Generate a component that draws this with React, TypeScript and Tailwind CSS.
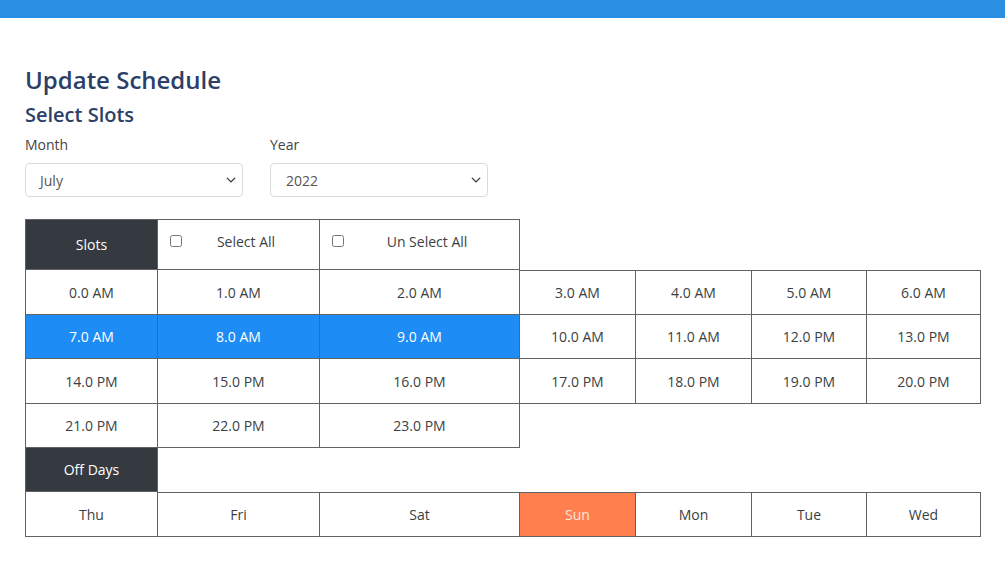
import React, { useState } from 'react';

const W = ['w-[132px]', 'w-[162px]', 'w-[200px]', 'w-[116px]', 'w-[116px]', 'w-[115px]', 'w-[114px]'];
const H = ['h-[45px]', 'h-[44px]', 'h-[45px]', 'h-[44px]'];

const slotRows: string[][] = [
  ['0.0 AM', '1.0 AM', '2.0 AM', '3.0 AM', '4.0 AM', '5.0 AM', '6.0 AM'],
  ['7.0 AM', '8.0 AM', '9.0 AM', '10.0 AM', '11.0 AM', '12.0 PM', '13.0 PM'],
  ['14.0 PM', '15.0 PM', '16.0 PM', '17.0 PM', '18.0 PM', '19.0 PM', '20.0 PM'],
  ['21.0 PM', '22.0 PM', '23.0 PM'],
];

const days = ['Thu', 'Fri', 'Sat', 'Sun', 'Mon', 'Tue', 'Wed'];

const Chevron = () => (
  <svg width="10" height="10" viewBox="0 0 16 16">
    <path d="M2 5l6 6 6-6" fill="none" stroke="#343a40" strokeWidth="2.2" strokeLinecap="round" strokeLinejoin="round" />
  </svg>
);

const App: React.FC = () => {
  const [selected, setSelected] = useState<string[]>(['7.0 AM', '8.0 AM', '9.0 AM']);
  const [offDays, setOffDays] = useState<string[]>(['Sun']);

  const toggle = (s: string) =>
    setSelected(selected.includes(s) ? selected.filter(x => x !== s) : [...selected, s]);
  const toggleDay = (d: string) =>
    setOffDays(offDays.includes(d) ? offDays.filter(x => x !== d) : [...offDays, d]);

  const cell = 'flex items-center justify-center border-r border-b border-[#5f6368] text-[14px]';

  return (
    <div className="min-h-[561px] bg-white font-['Open_Sans','Noto_Sans',sans-serif] text-[#3a3f44]">
      <div className="h-[18px] bg-[#2a8fe3]" />
      <div className="px-[25px] pt-[46px]">
        <h1 className="text-[24px] font-semibold leading-[32px] text-[#2c3f68]">Update Schedule</h1>
        <h2 className="mt-[6px] text-[20px] font-semibold leading-[26px] text-[#2c3f68]">Select Slots</h2>

        <div className="mt-[8px] flex gap-[27px]">
          <div className="w-[218px]">
            <label className="block text-[14px] leading-[18px] text-[#444]">Month</label>
            <div className="mt-[9px] flex h-[34px] items-center justify-between rounded-[4px] border border-[#d7dbe0] pl-[14px] pr-[6px] text-[14px] text-[#555]">
              <span>July</span>
              <Chevron />
            </div>
          </div>
          <div className="w-[218px]">
            <label className="block text-[14px] leading-[18px] text-[#444]">Year</label>
            <div className="mt-[9px] flex h-[34px] items-center justify-between rounded-[4px] border border-[#d7dbe0] pl-[15px] pr-[6px] text-[14px] text-[#555]">
              <span>2022</span>
              <Chevron />
            </div>
          </div>
        </div>

        <div className="mt-[22px] flex w-fit flex-col">
          <div className="flex h-[51px] w-fit border-t border-l border-[#5f6368]">
            <div className={`${cell} ${W[0]} bg-[#343a40] text-white`}>Slots</div>
            <label className={`${cell} ${W[1]} relative cursor-pointer`}>
              <input type="checkbox" className="absolute left-[12px] top-[15px] h-[12px] w-[12px]" onChange={() => setSelected(slotRows.flat())} />
              <span className="-mt-[6px] pl-[15px]">Select All</span>
            </label>
            <label className={`${cell} ${W[2]} relative cursor-pointer`}>
              <input type="checkbox" className="absolute left-[12px] top-[15px] h-[12px] w-[12px]" onChange={() => setSelected([])} />
              <span className="-mt-[6px] pl-[15px]">Un Select All</span>
            </label>
          </div>
          {slotRows.map((row, ri) => (
            <div key={ri} className={`flex ${H[ri]} border-l border-[#5f6368]`}>
              {row.map((s, i) => {
                const on = selected.includes(s);
                return (
                  <div
                    key={s}
                    onClick={() => toggle(s)}
                    className={`${cell} ${W[i]} cursor-pointer ${ri === 0 && i >= 3 ? 'border-t' : ''} ${on ? 'bg-[#1e8cf5] text-white' : ''}`}
                  >
                    {s}
                  </div>
                );
              })}
            </div>
          ))}
          <div className="flex h-[44px] border-l border-[#5f6368]">
            <div className={`${cell} ${W[0]} bg-[#343a40] text-white`}>Off Days</div>
          </div>
          <div className="flex h-[45px] border-l border-[#5f6368]">
            {days.map((d, i) => {
              const on = offDays.includes(d);
              return (
                <div
                  key={d}
                  onClick={() => toggleDay(d)}
                  className={`${cell} ${W[i]} cursor-pointer ${i === 0 ? '' : 'border-t'} ${on ? 'bg-[#ff7f4f] text-[#ffe6d8]' : ''}`}
                >
                  {d}
                </div>
              );
            })}
          </div>
        </div>
      </div>
    </div>
  );
};

export default App;
